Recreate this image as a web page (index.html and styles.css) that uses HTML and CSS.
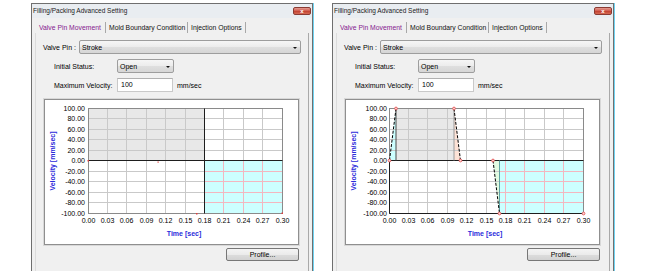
FILE: index.html
```html
<!DOCTYPE html>
<html>
<head>
<meta charset="utf-8">
<link rel="stylesheet" href="styles.css">
</head>
<body>
<div class="desk">

  <div class="window">
    <div class="titlebar">
      <span class="title">Filling/Packing Advanced Setting</span>
      <span class="close">x</span>
    </div>
    <div class="wbody">
      <div class="tabs">
        <span class="tab active">Valve Pin Movement</span>
        <span class="tab t2">Mold Boundary Condition</span>
        <span class="tab t3">Injection Options</span>
      </div>
      <div class="panel">
        <div class="row">
          <span class="lbl">Valve Pin :</span>
          <div class="select wide"><span>Stroke</span><span class="arrow"></span></div>
        </div>
        <div class="row sub">
          <span class="lbl2">Initial Status:</span>
          <div class="select small"><span>Open</span><span class="arrow"></span></div>
        </div>
        <div class="row sub">
          <span class="lbl2">Maximum Velocity:</span>
          <div class="input">100</div>
          <span class="unit">mm/sec</span>
        </div>
        <div class="chart-frame"><div class="chart-inner">
          <svg class="chart" width="253" height="144" viewBox="0 0 253 144">
            <rect x="43.5" y="8.5" width="194" height="105" fill="#ffffff"/>
            <rect x="43.5" y="8.5" width="116" height="52" fill="#e8e8e8"/>
            <rect x="159.5" y="60.5" width="78" height="53" fill="#ccffff"/>
            <g class="grid">
              <line x1="62.5" y1="8.5" x2="62.5" y2="113.5"/>
              <line x1="81.5" y1="8.5" x2="81.5" y2="113.5"/>
              <line x1="101.5" y1="8.5" x2="101.5" y2="113.5"/>
              <line x1="120.5" y1="8.5" x2="120.5" y2="113.5"/>
              <line x1="140.5" y1="8.5" x2="140.5" y2="113.5"/>
              <line x1="178.5" y1="8.5" x2="178.5" y2="113.5"/>
              <line x1="198.5" y1="8.5" x2="198.5" y2="113.5"/>
              <line x1="217.5" y1="8.5" x2="217.5" y2="113.5"/>
              <line x1="43.5" y1="18.5" x2="237.5" y2="18.5"/>
              <line x1="43.5" y1="29.5" x2="237.5" y2="29.5"/>
              <line x1="43.5" y1="39.5" x2="237.5" y2="39.5"/>
              <line x1="43.5" y1="50.5" x2="237.5" y2="50.5"/>
              <line x1="43.5" y1="71.5" x2="237.5" y2="71.5"/>
              <line x1="43.5" y1="81.5" x2="237.5" y2="81.5"/>
              <line x1="43.5" y1="92.5" x2="237.5" y2="92.5"/>
              <line x1="43.5" y1="102.5" x2="237.5" y2="102.5"/>
            </g>
            <g class="grid-pink">
              <line x1="178.5" y1="61" x2="178.5" y2="113"/>
              <line x1="198.5" y1="61" x2="198.5" y2="113"/>
              <line x1="217.5" y1="61" x2="217.5" y2="113"/>
              <line x1="160" y1="71.5" x2="237" y2="71.5"/>
              <line x1="160" y1="81.5" x2="237" y2="81.5"/>
              <line x1="160" y1="92.5" x2="237" y2="92.5"/>
              <line x1="160" y1="102.5" x2="237" y2="102.5"/>
            </g>
            <rect class="plot-border" x="43.5" y="8.5" width="194" height="105"/>
            <line class="zero" x1="43.5" y1="60.5" x2="237.5" y2="60.5"/>
            <line class="zero" x1="159.5" y1="8.5" x2="159.5" y2="113.5"/>
            <g class="mark">
              <rect x="42.5" y="60" width="1.5" height="1.5"/>
              <rect x="112.5" y="61.5" width="1.2" height="1.2"/>
              <rect x="151" y="113" width="1.5" height="1.5"/>
              <rect x="236.5" y="112.5" width="1.5" height="1.5"/>
            </g>
            <g class="ylab">
              <text x="40" y="10.5">100.00</text>
              <text x="40" y="21">80.00</text>
              <text x="40" y="31.5">60.00</text>
              <text x="40" y="42">40.00</text>
              <text x="40" y="52.5">20.00</text>
              <text x="40" y="63">0.00</text>
              <text x="40" y="73.5">-20.00</text>
              <text x="40" y="84">-40.00</text>
              <text x="40" y="94.5">-60.00</text>
              <text x="40" y="105">-80.00</text>
              <text x="40" y="115.5">-100.00</text>
            </g>
            <g class="xlab">
              <text x="43.5" y="123">0.00</text>
              <text x="62.5" y="123">0.03</text>
              <text x="81.5" y="123">0.06</text>
              <text x="101.5" y="123">0.09</text>
              <text x="120.5" y="123">0.12</text>
              <text x="140.5" y="123">0.15</text>
              <text x="159.5" y="123">0.18</text>
              <text x="178.5" y="123">0.21</text>
              <text x="198.5" y="123">0.24</text>
              <text x="217.5" y="123">0.27</text>
              <text x="237.5" y="123">0.30</text>
            </g>
            <text class="axis-title" x="139" y="135.5">Time [sec]</text>
            <text class="axis-title" transform="translate(9.5 61) rotate(-90)" x="0" y="0">Velocity [mm/sec]</text>
          </svg>
        </div></div>
        <div class="btn-row"><div class="btn">Profile...</div></div>
      </div>
    </div>
  </div>

  <div class="window">
    <div class="titlebar">
      <span class="title">Filling/Packing Advanced Setting</span>
      <span class="close">x</span>
    </div>
    <div class="wbody">
      <div class="tabs">
        <span class="tab active">Valve Pin Movement</span>
        <span class="tab t2">Mold Boundary Condition</span>
        <span class="tab t3">Injection Options</span>
      </div>
      <div class="panel">
        <div class="row">
          <span class="lbl">Valve Pin :</span>
          <div class="select wide"><span>Stroke</span><span class="arrow"></span></div>
        </div>
        <div class="row sub">
          <span class="lbl2">Initial Status:</span>
          <div class="select small"><span>Open</span><span class="arrow"></span></div>
        </div>
        <div class="row sub">
          <span class="lbl2">Maximum Velocity:</span>
          <div class="input">100</div>
          <span class="unit">mm/sec</span>
        </div>
        <div class="chart-frame"><div class="chart-inner">
          <svg class="chart" width="253" height="144" viewBox="0 0 253 144">
            <rect x="43.5" y="8.5" width="194" height="105" fill="#ffffff"/>
            <polygon points="43.5,60.5 50,8.5 50,60.5" fill="#ccffff"/>
            <rect x="50" y="8.5" width="58" height="52" fill="#e8e8e8"/>
            <polygon points="108,8.5 114.5,60.5 108,60.5" fill="#fde2d6"/>
            <polygon points="147,60.5 153.5,113.5 153.5,60.5" fill="#e2fbe2"/>
            <rect x="153.5" y="60.5" width="84" height="53" fill="#ccffff"/>
            <g class="grid">
              <line x1="62.5" y1="8.5" x2="62.5" y2="113.5"/>
              <line x1="81.5" y1="8.5" x2="81.5" y2="113.5"/>
              <line x1="101.5" y1="8.5" x2="101.5" y2="113.5"/>
              <line x1="120.5" y1="8.5" x2="120.5" y2="113.5"/>
              <line x1="140.5" y1="8.5" x2="140.5" y2="113.5"/>
              <line x1="159.5" y1="8.5" x2="159.5" y2="60.5"/>
              <line x1="178.5" y1="8.5" x2="178.5" y2="60.5"/>
              <line x1="198.5" y1="8.5" x2="198.5" y2="60.5"/>
              <line x1="217.5" y1="8.5" x2="217.5" y2="60.5"/>
              <line x1="43.5" y1="18.5" x2="237.5" y2="18.5"/>
              <line x1="43.5" y1="29.5" x2="237.5" y2="29.5"/>
              <line x1="43.5" y1="39.5" x2="237.5" y2="39.5"/>
              <line x1="43.5" y1="50.5" x2="237.5" y2="50.5"/>
              <line x1="43.5" y1="71.5" x2="153.5" y2="71.5"/>
              <line x1="43.5" y1="81.5" x2="153.5" y2="81.5"/>
              <line x1="43.5" y1="92.5" x2="153.5" y2="92.5"/>
              <line x1="43.5" y1="102.5" x2="153.5" y2="102.5"/>
            </g>
            <g class="grid-pink">
              <line x1="159.5" y1="61" x2="159.5" y2="113"/>
              <line x1="178.5" y1="61" x2="178.5" y2="113"/>
              <line x1="198.5" y1="61" x2="198.5" y2="113"/>
              <line x1="217.5" y1="61" x2="217.5" y2="113"/>
              <line x1="154" y1="71.5" x2="237" y2="71.5"/>
              <line x1="154" y1="81.5" x2="237" y2="81.5"/>
              <line x1="154" y1="92.5" x2="237" y2="92.5"/>
              <line x1="154" y1="102.5" x2="237" y2="102.5"/>
            </g>
            <rect class="plot-border" x="43.5" y="8.5" width="194" height="105"/>
            <line class="zero" x1="43.5" y1="60.5" x2="237.5" y2="60.5"/>
            <line class="zero" x1="43.5" y1="60.5" x2="43.5" y2="113.5"/>
            <line class="zero" x1="43.5" y1="113.5" x2="237.5" y2="113.5"/>
            <line class="edge-dark" x1="50" y1="8.5" x2="50" y2="60.5"/>
            <line class="edge-mid" x1="108" y1="8.5" x2="108" y2="60.5"/>
            <line class="edge-teal" x1="153.5" y1="60.5" x2="153.5" y2="113.5"/>
            <g class="dash">
              <line x1="43.5" y1="60.5" x2="50" y2="8.5"/>
              <line x1="108" y1="8.5" x2="114.5" y2="60.5"/>
              <line x1="147" y1="60.5" x2="153.5" y2="113.5"/>
            </g>
            <g class="pt">
              <circle cx="43.5" cy="60.5" r="1.4"/>
              <circle cx="50" cy="8.5" r="1.4"/>
              <circle cx="108" cy="8.5" r="1.4"/>
              <circle cx="114.5" cy="60.5" r="1.4"/>
              <circle cx="147" cy="60.5" r="1.4"/>
              <circle cx="153.5" cy="113.5" r="1.4"/>
              <circle cx="237.5" cy="113.5" r="1.4"/>
            </g>
            <g class="ylab">
              <text x="41" y="10.5">100.00</text>
              <text x="41" y="21">80.00</text>
              <text x="41" y="31.5">60.00</text>
              <text x="41" y="42">40.00</text>
              <text x="41" y="52.5">20.00</text>
              <text x="41" y="63">0.00</text>
              <text x="41" y="73.5">-20.00</text>
              <text x="41" y="84">-40.00</text>
              <text x="41" y="94.5">-60.00</text>
              <text x="41" y="105">-80.00</text>
              <text x="41" y="115.5">-100.00</text>
            </g>
            <g class="xlab">
              <text x="43.5" y="123">0.00</text>
              <text x="62.5" y="123">0.03</text>
              <text x="81.5" y="123">0.06</text>
              <text x="101.5" y="123">0.09</text>
              <text x="120.5" y="123">0.12</text>
              <text x="140.5" y="123">0.15</text>
              <text x="159.5" y="123">0.18</text>
              <text x="178.5" y="123">0.21</text>
              <text x="198.5" y="123">0.24</text>
              <text x="217.5" y="123">0.27</text>
              <text x="237.5" y="123">0.30</text>
            </g>
            <text class="axis-title" x="139" y="135.5">Time [sec]</text>
            <text class="axis-title" transform="translate(9.5 61) rotate(-90)" x="0" y="0">Velocity [mm/sec]</text>
          </svg>
        </div></div>
        <div class="btn-row"><div class="btn">Profile...</div></div>
      </div>
    </div>
  </div>

</div>
</body>
</html>
```
FILE: styles.css
```css
html, body {
  margin: 0;
  padding: 0;
  background: #ffffff;
  width: 650px;
  height: 271px;
  overflow: hidden;
}

body {
  font-family: "Liberation Sans", Arial, sans-serif;
  font-size: 7px;
  color: #000;
}

.desk {
  display: flex;
  gap: 19px;
  padding: 3px 0 0 31px;
}

.window {
  box-sizing: border-box;
  width: 282px;
  height: 268px;
  border: 1px solid #6f6f6f;
  border-bottom: none;
  background: #f0f0f0;
  box-shadow: 1px 0 0 #6fd3f2;
  display: flex;
  flex-direction: column;
}

.titlebar {
  height: 14px;
  flex: none;
  display: flex;
  justify-content: space-between;
  align-items: flex-start;
  background: #e9edf1;
  padding: 0 1px 0 1px;
}

.title {
  font-size: 6.5px;
  line-height: 13px;
  color: #1a1a1a;
}

.close {
  box-sizing: border-box;
  margin-top: 3px;
  width: 18px;
  height: 8px;
  border: 1px solid #8a3a32;
  border-radius: 2px;
  background: linear-gradient(#e49a90, #cf5a4c 50%, #c2402f 51%, #d56a55);
  color: #fff;
  font-size: 6px;
  font-weight: bold;
  line-height: 6px;
  text-align: center;
}

.wbody {
  flex: 1;
  min-height: 0;
  padding: 4px 3px 0 3px;
  display: flex;
  flex-direction: column;
}

.tabs {
  display: flex;
  flex: none;
  height: 11px;
  padding-left: 1px;
}

.tab {
  box-sizing: border-box;
  height: 11px;
  line-height: 11px;
  font-size: 6.8px;
  padding-left: 3px;
  border-right: 1px solid #a8a8a8;
  color: #111;
}

.tab.active {
  width: 70px;
  color: #85208f;
}

.tab.t2 {
  width: 82px;
}

.tab.t3 {
  width: 58px;
}

.panel {
  box-sizing: border-box;
  width: 274px;
  flex: 1;
  min-height: 0;
  border-left: 1px solid #dcdcdc;
  border-right: 1px solid #a9a9a9;
  padding: 7px 7px 0 7px;
  display: flex;
  flex-direction: column;
}

.row {
  display: flex;
  align-items: center;
  height: 14px;
  flex: none;
}

.row.sub {
  margin-top: 5px;
  padding-left: 11px;
}

.lbl {
  width: 36px;
}

.lbl2 {
  width: 63px;
}

.select {
  box-sizing: border-box;
  height: 14px;
  border: 1px solid #9d9d9d;
  border-radius: 2px;
  background: linear-gradient(#f6f6f6, #ececec 50%, #dfdfdf 51%, #d6d6d6);
  display: flex;
  align-items: center;
  justify-content: space-between;
  padding: 0 3px 0 2px;
}

.select.wide {
  width: 222px;
}

.select.small {
  width: 57px;
}

.arrow {
  width: 0;
  height: 0;
  border-left: 2px solid transparent;
  border-right: 2px solid transparent;
  border-top: 2.5px solid #111;
  margin-top: 1px;
}

.input {
  box-sizing: border-box;
  width: 56px;
  height: 14px;
  line-height: 12px;
  background: #fff;
  border: 1px solid #c9c9c9;
  border-top-color: #b0b0b0;
  padding-left: 3px;
}

.unit {
  margin-left: 4px;
}

.chart-frame {
  flex: none;
  margin-top: 6px;
  width: 257px;
  border: 1px solid #d8d8d8;
  box-sizing: border-box;
}

.chart-inner {
  border: 1px solid #8f8f8f;
  background: #fff;
  height: 144px;
}

.chart {
  display: block;
  font-family: "Liberation Sans", Arial, sans-serif;
}

.grid line {
  stroke: #c9c9c9;
  stroke-width: 1;
}

.grid-pink line {
  stroke: #f4b6bf;
  stroke-width: 1;
}

.plot-border {
  fill: none;
  stroke: #8a8a8a;
  stroke-width: 1;
}

.zero {
  stroke: #1e1e1e;
  stroke-width: 1;
}

.edge-dark {
  stroke: #4a4a4a;
}

.edge-mid {
  stroke: #9a9a9a;
}

.edge-teal {
  stroke: #5fa3a3;
}

.dash line {
  stroke: #000;
  stroke-width: 1;
  stroke-dasharray: 3 1.5;
}

.pt circle {
  fill: #ffd6d6;
  stroke: #e04848;
  stroke-width: 0.8;
}

.mark rect {
  fill: #e04040;
}

.ylab text {
  font-size: 7px;
  text-anchor: end;
  fill: #000;
}

.xlab text {
  font-size: 7px;
  text-anchor: middle;
  fill: #000;
}

.axis-title {
  font-size: 7px;
  font-weight: bold;
  text-anchor: middle;
  fill: #2b2bdb;
}

.btn-row {
  display: flex;
  flex: none;
  justify-content: flex-end;
  margin-top: 2px;
  padding-right: 2px;
}

.btn {
  box-sizing: border-box;
  width: 73px;
  height: 13px;
  line-height: 11px;
  text-align: center;
  border: 1px solid #777;
  border-radius: 2px;
  background: linear-gradient(#f4f4f4, #ebebeb 50%, #dddddd 51%, #d2d2d2);
}
```
